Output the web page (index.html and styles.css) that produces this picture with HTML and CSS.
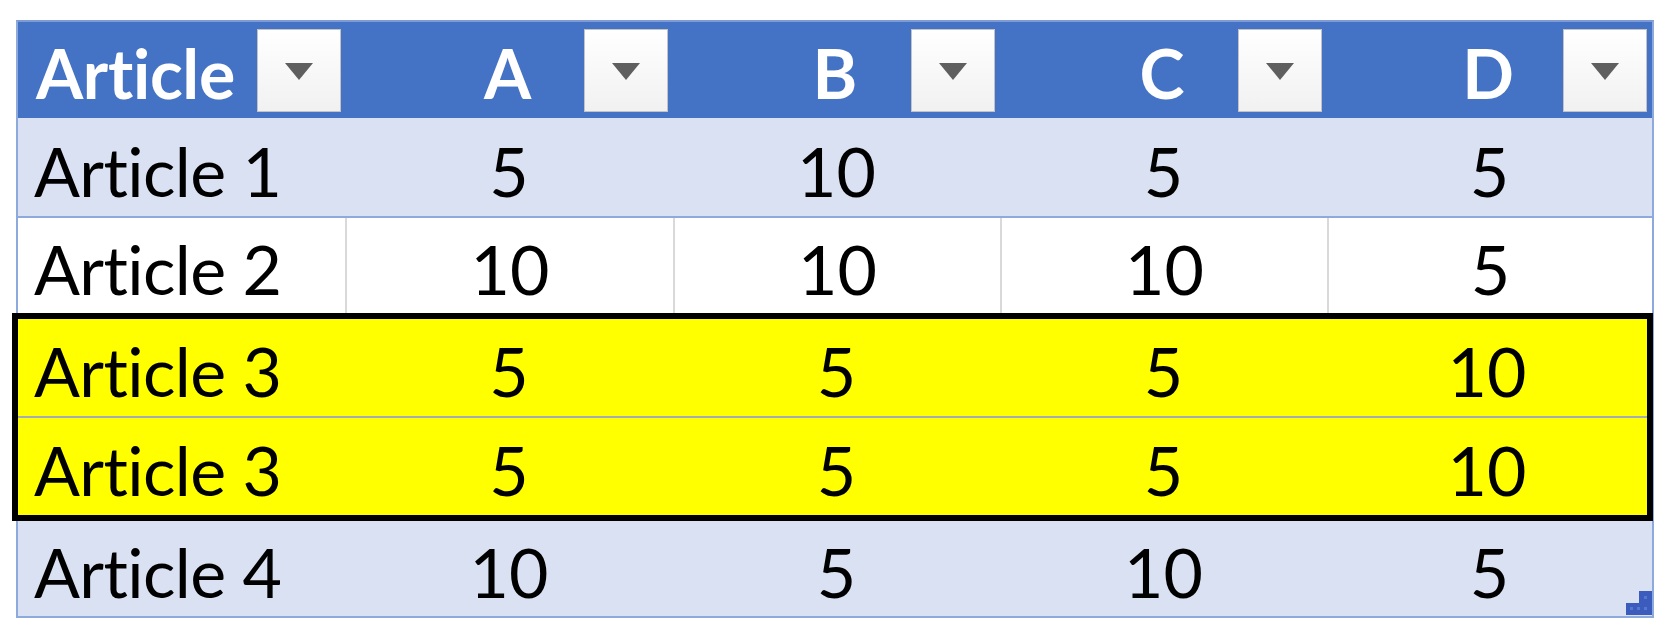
FILE: index.html
```html
<!DOCTYPE html>
<html lang="en">
<head>
<meta charset="utf-8">
<title>Articles table</title>
<link rel="stylesheet" href="styles.css">
</head>
<body>
<div class="sheet">
  <div class="table">
    <div class="row head">
      <div class="hcell first">
        <span class="htext">Article</span>
        <span class="dd"><svg viewBox="0 0 28 18" width="28" height="18"><polygon points="0,0 28,0 14,17" fill="#5f5f5f"/></svg></span>
      </div>
      <div class="hcell">
        <span class="spacer"></span>
        <span class="htext">A</span>
        <span class="dd"><svg viewBox="0 0 28 18" width="28" height="18"><polygon points="0,0 28,0 14,17" fill="#5f5f5f"/></svg></span>
      </div>
      <div class="hcell">
        <span class="spacer"></span>
        <span class="htext">B</span>
        <span class="dd"><svg viewBox="0 0 28 18" width="28" height="18"><polygon points="0,0 28,0 14,17" fill="#5f5f5f"/></svg></span>
      </div>
      <div class="hcell">
        <span class="spacer"></span>
        <span class="htext">C</span>
        <span class="dd"><svg viewBox="0 0 28 18" width="28" height="18"><polygon points="0,0 28,0 14,17" fill="#5f5f5f"/></svg></span>
      </div>
      <div class="hcell">
        <span class="spacer"></span>
        <span class="htext">D</span>
        <span class="dd"><svg viewBox="0 0 28 18" width="28" height="18"><polygon points="0,0 28,0 14,17" fill="#5f5f5f"/></svg></span>
      </div>
    </div>

    <div class="row band r1">
      <div class="cell label">Article 1</div>
      <div class="cell num">5</div>
      <div class="cell num">10</div>
      <div class="cell num">5</div>
      <div class="cell num">5</div>
    </div>

    <div class="row plain r2">
      <div class="cell label">Article 2</div>
      <div class="cell num">10</div>
      <div class="cell num">10</div>
      <div class="cell num">10</div>
      <div class="cell num">5</div>
    </div>

    <div class="highlight">
      <div class="row yellow r3">
        <div class="cell label">Article 3</div>
        <div class="cell num">5</div>
        <div class="cell num">5</div>
        <div class="cell num">5</div>
        <div class="cell num">10</div>
      </div>
      <div class="row yellow r4">
        <div class="cell label">Article 3</div>
        <div class="cell num">5</div>
        <div class="cell num">5</div>
        <div class="cell num">5</div>
        <div class="cell num">10</div>
      </div>
    </div>

    <div class="row band r5">
      <div class="cell label">Article 4</div>
      <div class="cell num">10</div>
      <div class="cell num">5</div>
      <div class="cell num">10</div>
      <div class="cell num">5</div>
    </div>

    <span class="resize"><svg viewBox="0 0 26 24" width="26" height="24">
      <polygon points="13,0 26,0 26,24 0,24 0,12 13,12" fill="#3b5cbd"/>
      <rect x="4" y="16" width="3" height="3" fill="#5677cf"/>
      <rect x="11" y="16" width="3" height="3" fill="#5677cf"/>
      <rect x="18" y="16" width="3" height="3" fill="#5677cf"/>
      <rect x="18" y="5" width="3" height="3" fill="#5677cf"/>
    </svg></span>
  </div>
</div>
</body>
</html>
```

FILE: styles.css
```css
html, body {
  margin: 0;
  padding: 0;
  background: #ffffff;
}

body {
  width: 1664px;
  height: 640px;
  overflow: hidden;
  font-family: "Lato", "Open Sans", sans-serif;
  font-variant-ligatures: none;
  color: #000000;
}

.sheet {
  padding: 20px 10px 0 16px;
}

.table {
  position: relative;
  width: 1634px;
  border: 2px solid #8ea9db;
  border-top-color: #7e9bd6;
}

.row {
  display: grid;
  grid-template-columns: 327px 328px 327px 327px 1fr;
  font-size: 68px;
  line-height: 1;
}

.head {
  height: 96px;
  background: #4472c4;
  color: #ffffff;
  font-weight: 700;
}

.hcell {
  display: grid;
  grid-template-columns: 86px 1fr 86px;
  align-items: center;
  padding-right: 3px;
}

.hcell.first {
  grid-template-columns: 1fr 86px;
  padding-left: 18px;
  padding-right: 2px;
}

.htext {
  text-align: center;
  padding-top: 6px;
}

.hcell.first .htext {
  text-align: left;
  letter-spacing: -0.3px;
}

.dd {
  width: 84px;
  height: 83px;
  box-sizing: border-box;
  border: 1px solid #c3c3c3;
  background: linear-gradient(#ffffff, #f1f1f1);
  display: flex;
  align-items: center;
  justify-content: center;
}

.dd svg {
  margin-top: 4px;
  display: block;
}

.cell {
  display: flex;
  align-items: center;
  padding-top: 7px;
  box-sizing: border-box;
}

.cell.label {
  padding-left: 16px;
  letter-spacing: -0.6px;
}

.cell.num {
  justify-content: center;
}

.band {
  background: #d9e1f2;
}

.r1 {
  height: 100px;
  border-bottom: 2px solid #8ea9db;
  box-sizing: border-box;
}

.r2 {
  height: 95px;
  background: #ffffff;
}

.r2 .cell + .cell {
  border-left: 2px solid #d9d9d9;
}

.highlight {
  border: 6px solid #000000;
  margin-left: -6px;
  margin-right: -1px;
}

.yellow {
  background: #ffff00;
}

.r3 {
  height: 99px;
  border-bottom: 2px solid #a3abb5;
  box-sizing: border-box;
}

.r4 {
  height: 97px;
}

.r5 {
  height: 95px;
}

.resize {
  position: absolute;
  right: 0;
  bottom: 1px;
  width: 26px;
  height: 24px;
  line-height: 0;
}
```
